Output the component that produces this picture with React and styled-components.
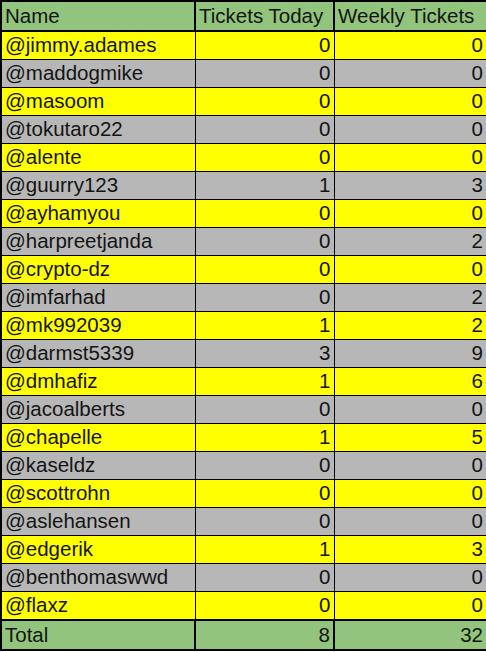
import React from 'react';
import styled, { createGlobalStyle } from 'styled-components';

const GlobalStyle = createGlobalStyle`
  html, body {
    margin: 0;
    padding: 0;
    background: #ffffff;
  }
  body {
    font-family: "Liberation Sans", Arial, sans-serif;
  }
`;

const Sheet = styled.table`
  width: 486px;
  table-layout: fixed;
  border-collapse: collapse;
  font-family: "Liberation Sans", Arial, sans-serif;
  font-size: 20.5px;
  color: #141414;
  border: 2px solid #000;
`;

const Col = styled.col`
  width: ${props => props.w}px;
`;

const Row = styled.tr`
  background: ${props => props.bg};
`;

const Cell = styled.td`
  height: ${props => props.h || 27}px;
  padding: 0 3px;
  text-align: ${props => props.num ? 'right' : 'left'};
  font-weight: 400;
  white-space: nowrap;
  overflow: hidden;
  line-height: 1;
  border: ${props => props.thick ? 2 : 1}px solid #000;
`;

const GREEN = '#93c47d';
const YELLOW = '#ffff00';
const GRAY = '#b7b7b7';

const users = [
  ['jimmy.adames', 0, 0],
  ['maddogmike', 0, 0],
  ['masoom', 0, 0],
  ['tokutaro22', 0, 0],
  ['alente', 0, 0],
  ['guurry123', 1, 3],
  ['ayhamyou', 0, 0],
  ['harpreetjanda', 0, 2],
  ['crypto-dz', 0, 0],
  ['imfarhad', 0, 2],
  ['mk992039', 1, 2],
  ['darmst5339', 3, 9],
  ['dmhafiz', 1, 6],
  ['jacoalberts', 0, 0],
  ['chapelle', 1, 5],
  ['kaseldz', 0, 0],
  ['scottrohn', 0, 0],
  ['aslehansen', 0, 0],
  ['edgerik', 1, 3],
  ['benthomaswwd', 0, 0],
  ['flaxz', 0, 0],
];

const App = () => {
  const today = users.reduce((s, u) => s + u[1], 0);
  const weekly = users.reduce((s, u) => s + u[2], 0);

  return (
    <>
      <GlobalStyle />
      <Sheet>
        <colgroup>
          <Col w={194} />
          <Col w={139} />
          <Col w={153} />
        </colgroup>
        <thead>
          <Row bg={GREEN}>
            <Cell as="th" thick h={28}>Name</Cell>
            <Cell as="th" thick h={28}>Tickets Today</Cell>
            <Cell as="th" thick h={28}>Weekly Tickets</Cell>
          </Row>
        </thead>
        <tbody>
          {users.map(([name, t, w], i) => (
            <Row key={name} bg={i % 2 === 0 ? YELLOW : GRAY}>
              <Cell>@{name}</Cell>
              <Cell num>{t}</Cell>
              <Cell num>{w}</Cell>
            </Row>
          ))}
          <Row bg={GREEN}>
            <Cell thick h={28}>Total</Cell>
            <Cell thick num h={28}>{today}</Cell>
            <Cell thick num h={28}>{weekly}</Cell>
          </Row>
        </tbody>
      </Sheet>
    </>
  );
};

export default App;
